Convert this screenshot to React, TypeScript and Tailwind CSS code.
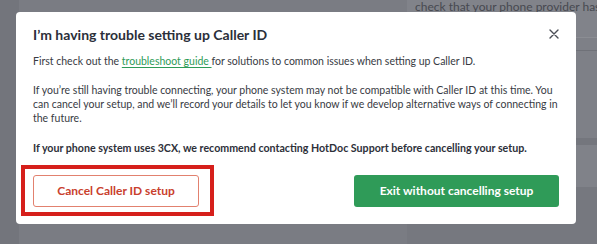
import React from "react";

export default function App() {
  return (
    <div
      className="relative w-[597px] h-[244px] overflow-hidden bg-[#7a7c83] flex"
      style={{ fontFamily: "Lato, 'Open Sans', sans-serif" }}
    >
      {/* page behind overlay */}
      <div className="w-[19px] bg-[#73757c]" />
      <div className="flex-1 flex justify-end">
        <div className="w-[190px] flex flex-col">
          <div className="h-[37px] bg-[#81838a] pl-[8px] overflow-hidden">
            <div className="mt-[-14px] whitespace-nowrap text-[12px] leading-[14px] text-[#474950]">
              If your practice uses a separate phone provider, please
            </div>
            <div className="whitespace-nowrap text-[12px] leading-[14px] text-[#474950]">
              check that your phone provider has completed the setup
            </div>
          </div>
          <div className="h-px bg-[#8b8d93]" />
          <div className="h-[12px] bg-[#7e8087]" />
          <div className="h-px bg-[#6f7178]" />
          <div className="h-[87px] bg-[#7e8087]" />
          <div className="h-[7px] bg-[#74767d]" />
          <div className="h-[42px] bg-[#808289]" />
          <div className="flex-1 bg-[#76787f]" />
        </div>
      </div>

      {/* modal */}
      <div className="absolute left-[16px] top-[12px] w-[560px] h-[212px] bg-white rounded-[4px] px-[17px] pt-[12px] pb-[17px] flex flex-col">
        <div className="flex items-start justify-between">
          <h2 className="text-[14px] leading-[22px] font-bold text-[#2b2f3a]">
            I’m having trouble setting up Caller ID
          </h2>
          <button className="mt-[4px] mr-[-1px] w-[12px] h-[12px] flex items-center justify-center">
            <svg width="10" height="10" viewBox="0 0 10 10" fill="none">
              <path d="M1 1L9 9M9 1L1 9" stroke="#4b4e56" strokeWidth="1.4" strokeLinecap="round" />
            </svg>
          </button>
        </div>
        <p className="mt-[8px] text-[10.5px] leading-[14.3px] text-[#383b43]">
          First check out the{" "}
          <a className="text-[#2e9b57] underline underline-offset-[2px]">troubleshoot guide </a>
          for solutions to common issues when setting up Caller ID.
        </p>
        <p className="mt-[14.5px] text-[10.5px] leading-[14.3px] text-[#383b43]">
          If you’re still having trouble connecting, your phone system may not be compatible with Caller ID at this
          time. You can cancel your setup, and we’ll record your details to let you know if we develop alternative
          ways of connecting in the future.
        </p>
        <p className="mt-[15px] text-[10.65px] leading-[14.3px] font-bold text-[#2d3039]">
          If your phone system uses 3CX, we recommend contacting HotDoc Support before cancelling your setup.
        </p>
        <div className="mt-auto flex justify-between items-end">
          <div className="relative">
            <button className="w-[166px] h-[32px] rounded-[3px] border border-[#e2816f] bg-white text-[12px] font-bold text-[#c9402d]">
              Cancel Caller ID setup
            </button>
            <div className="absolute left-[-12px] top-[-10px] w-[193px] h-[51px] border-[4px] border-[#d61f1b] pointer-events-none" />
          </div>
          <button className="w-[205px] h-[32px] rounded-[3px] bg-[#2f9b58] text-[12px] font-bold text-white">
            Exit without cancelling setup
          </button>
        </div>
      </div>
    </div>
  );
}
